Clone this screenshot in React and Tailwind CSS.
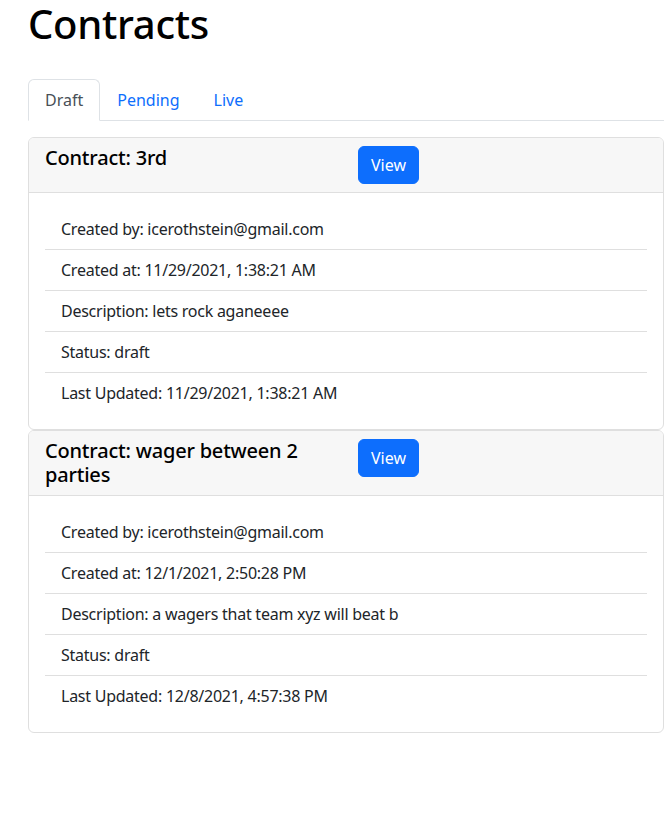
import React from "react";

const contracts = [
  {
    title: "3rd",
    rows: [
      "Created by: icerothstein@gmail.com",
      "Created at: 11/29/2021, 1:38:21 AM",
      "Description: lets rock aganeeee",
      "Status: draft",
      "Last Updated: 11/29/2021, 1:38:21 AM",
    ],
  },
  {
    title: "wager between 2 parties",
    rows: [
      "Created by: icerothstein@gmail.com",
      "Created at: 12/1/2021, 2:50:28 PM",
      "Description: a wagers that team xyz will beat b",
      "Status: draft",
      "Last Updated: 12/8/2021, 4:57:38 PM",
    ],
  },
];

function Card({ c }) {
  return (
    <div className="border border-[#dfdfdf] rounded-[6px] bg-white">
      <div className="bg-[#f7f7f7] border-b border-[#dfdfdf] rounded-t-[5px] px-4 py-2">
        <div className="grid grid-cols-2 gap-x-6">
          <h5 className="text-[20px] leading-[24px] font-medium text-black m-0 tracking-[-0.2px]">
            Contract: {c.title}
          </h5>
          <div>
            <button className="bg-[#0d6efd] text-white text-[16px] leading-[24px] px-3 py-[6px] rounded-[6px] border border-[#0d6efd]">
              View
            </button>
          </div>
        </div>
      </div>
      <div className="p-4">
        {c.rows.map((r, i) => (
          <div
            key={i}
            className={`px-4 py-2 text-[16px] leading-[24px] text-[#212529] tracking-[-0.25px] ${
              i < c.rows.length - 1 ? "border-b border-[#dfdfdf]" : ""
            }`}
          >
            {r}
          </div>
        ))}
      </div>
    </div>
  );
}

export default function App() {
  return (
    <div
      className="bg-white min-h-[823px] w-[672px]"
      style={{ fontFamily: '"Noto Sans", sans-serif' }}
    >
      <div className="ml-[28px] w-[636px]">
        <h1 className="text-[40px] leading-[48px] font-medium text-black m-0 pt-0 tracking-[-0.3px]">
          Contracts
        </h1>
        <div className="flex border-b border-[#dee2e6] mt-[31px]">
          <div className="px-4 py-2 border border-[#dee2e6] border-b-white -mb-px rounded-t-[6px] bg-white text-[#495057] text-[16px] leading-[24px]">
            Draft
          </div>
          <div className="px-4 py-2 border border-transparent -mb-px text-[#0d6efd] text-[16px] leading-[24px]">
            Pending
          </div>
          <div className="px-4 py-2 border border-transparent -mb-px text-[#0d6efd] text-[16px] leading-[24px]">
            Live
          </div>
        </div>
        <div className="mt-4">
          {contracts.map((c, i) => (
            <Card key={i} c={c} />
          ))}
        </div>
      </div>
    </div>
  );
}
